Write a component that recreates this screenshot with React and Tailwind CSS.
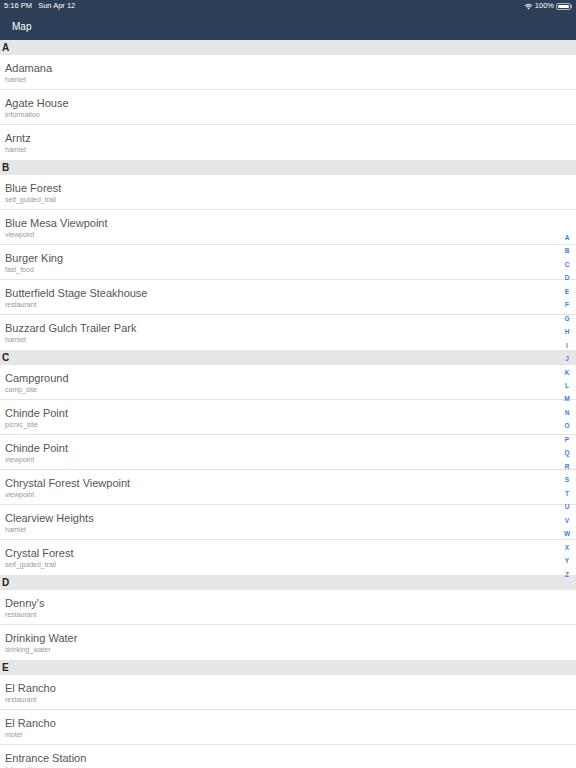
import React from "react";

const sections = [
  ["A", [["Adamana", "hamlet"], ["Agate House", "information"], ["Arntz", "hamlet"]]],
  ["B", [["Blue Forest", "self_guided_trail"], ["Blue Mesa Viewpoint", "viewpoint"], ["Burger King", "fast_food"], ["Butterfield Stage Steakhouse", "restaurant"], ["Buzzard Gulch Trailer Park", "hamlet"]]],
  ["C", [["Campground", "camp_site"], ["Chinde Point", "picnic_site"], ["Chinde Point", "viewpoint"], ["Chrystal Forest Viewpoint", "viewpoint"], ["Clearview Heights", "hamlet"], ["Crystal Forest", "self_guided_trail"]]],
  ["D", [["Denny's", "restaurant"], ["Drinking Water", "drinking_water"]]],
  ["E", [["El Rancho", "restaurant"], ["El Rancho", "motel"], ["Entrance Station", "information"]]],
];

const letters = "ABCDEFGHIJKLMNOPQRSTUVWXYZ".split("");

export default function App() {
  return (
    <div className="w-[576px] h-[768px] overflow-hidden relative bg-white" style={{ fontFamily: "'Helvetica Neue', 'Liberation Sans', Arial, sans-serif" }}>
      <div className="bg-[#2c3f56] h-[40px] flex flex-col">
        <div className="h-[12px] flex items-center justify-between px-[4px] text-white text-[7.5px]">
          <span>5:16 PM&nbsp;&nbsp;&nbsp;Sun Apr 12</span>
          <span className="flex items-center gap-[2px]">
            <svg width="9" height="7" viewBox="0 0 12 9">
              <path d="M6 8.5 L4.3 6.6 A2.5 2.5 0 0 1 7.7 6.6 Z" fill="white" />
              <path d="M2.6 4.9 A4.8 4.8 0 0 1 9.4 4.9 L8.5 5.8 A3.5 3.5 0 0 0 3.5 5.8 Z" fill="white" />
              <path d="M0.8 3.1 A7.4 7.4 0 0 1 11.2 3.1 L10.3 4 A6.1 6.1 0 0 0 1.7 4 Z" fill="white" />
            </svg>
            <span>100%</span>
            <span className="flex items-center">
              <span className="w-[15px] h-[7px] rounded-[2px] border border-white/60 p-[1px] flex"><span className="flex-1 bg-white rounded-[1px]" /></span>
              <span className="w-[1px] h-[3px] bg-white/60" />
            </span>
          </span>
        </div>
        <div className="flex-1 flex items-center px-[12px] text-white text-[10px]">Map</div>
      </div>
      <div>
        {sections.map(([letter, rows]) => (
          <div key={letter}>
            <div className="h-[15px] bg-[#e6e6e6] flex items-center px-[2px] text-[10px] font-bold text-[#222]">{letter}</div>
            {rows.map(([t, s], i) => (
              <div key={i} className={"h-[35px] flex flex-col justify-center px-[5px] " + (i < rows.length - 1 ? "border-b border-[#e3e3e3]" : "")}>
                <div className="text-[11px] leading-[14px] text-[#555]">{t}</div>
                <div className="text-[7px] leading-[9px] text-[#9a9a9a]">{s}</div>
              </div>
            ))}
          </div>
        ))}
      </div>
      <div className="absolute right-[4px] top-[231px] w-[10px] flex flex-col items-center">
        {letters.map((l) => (
          <div key={l} className="h-[13.48px] flex items-center text-[6.5px] font-bold text-[#3b7ee8]">{l}</div>
        ))}
      </div>
    </div>
  );
}
